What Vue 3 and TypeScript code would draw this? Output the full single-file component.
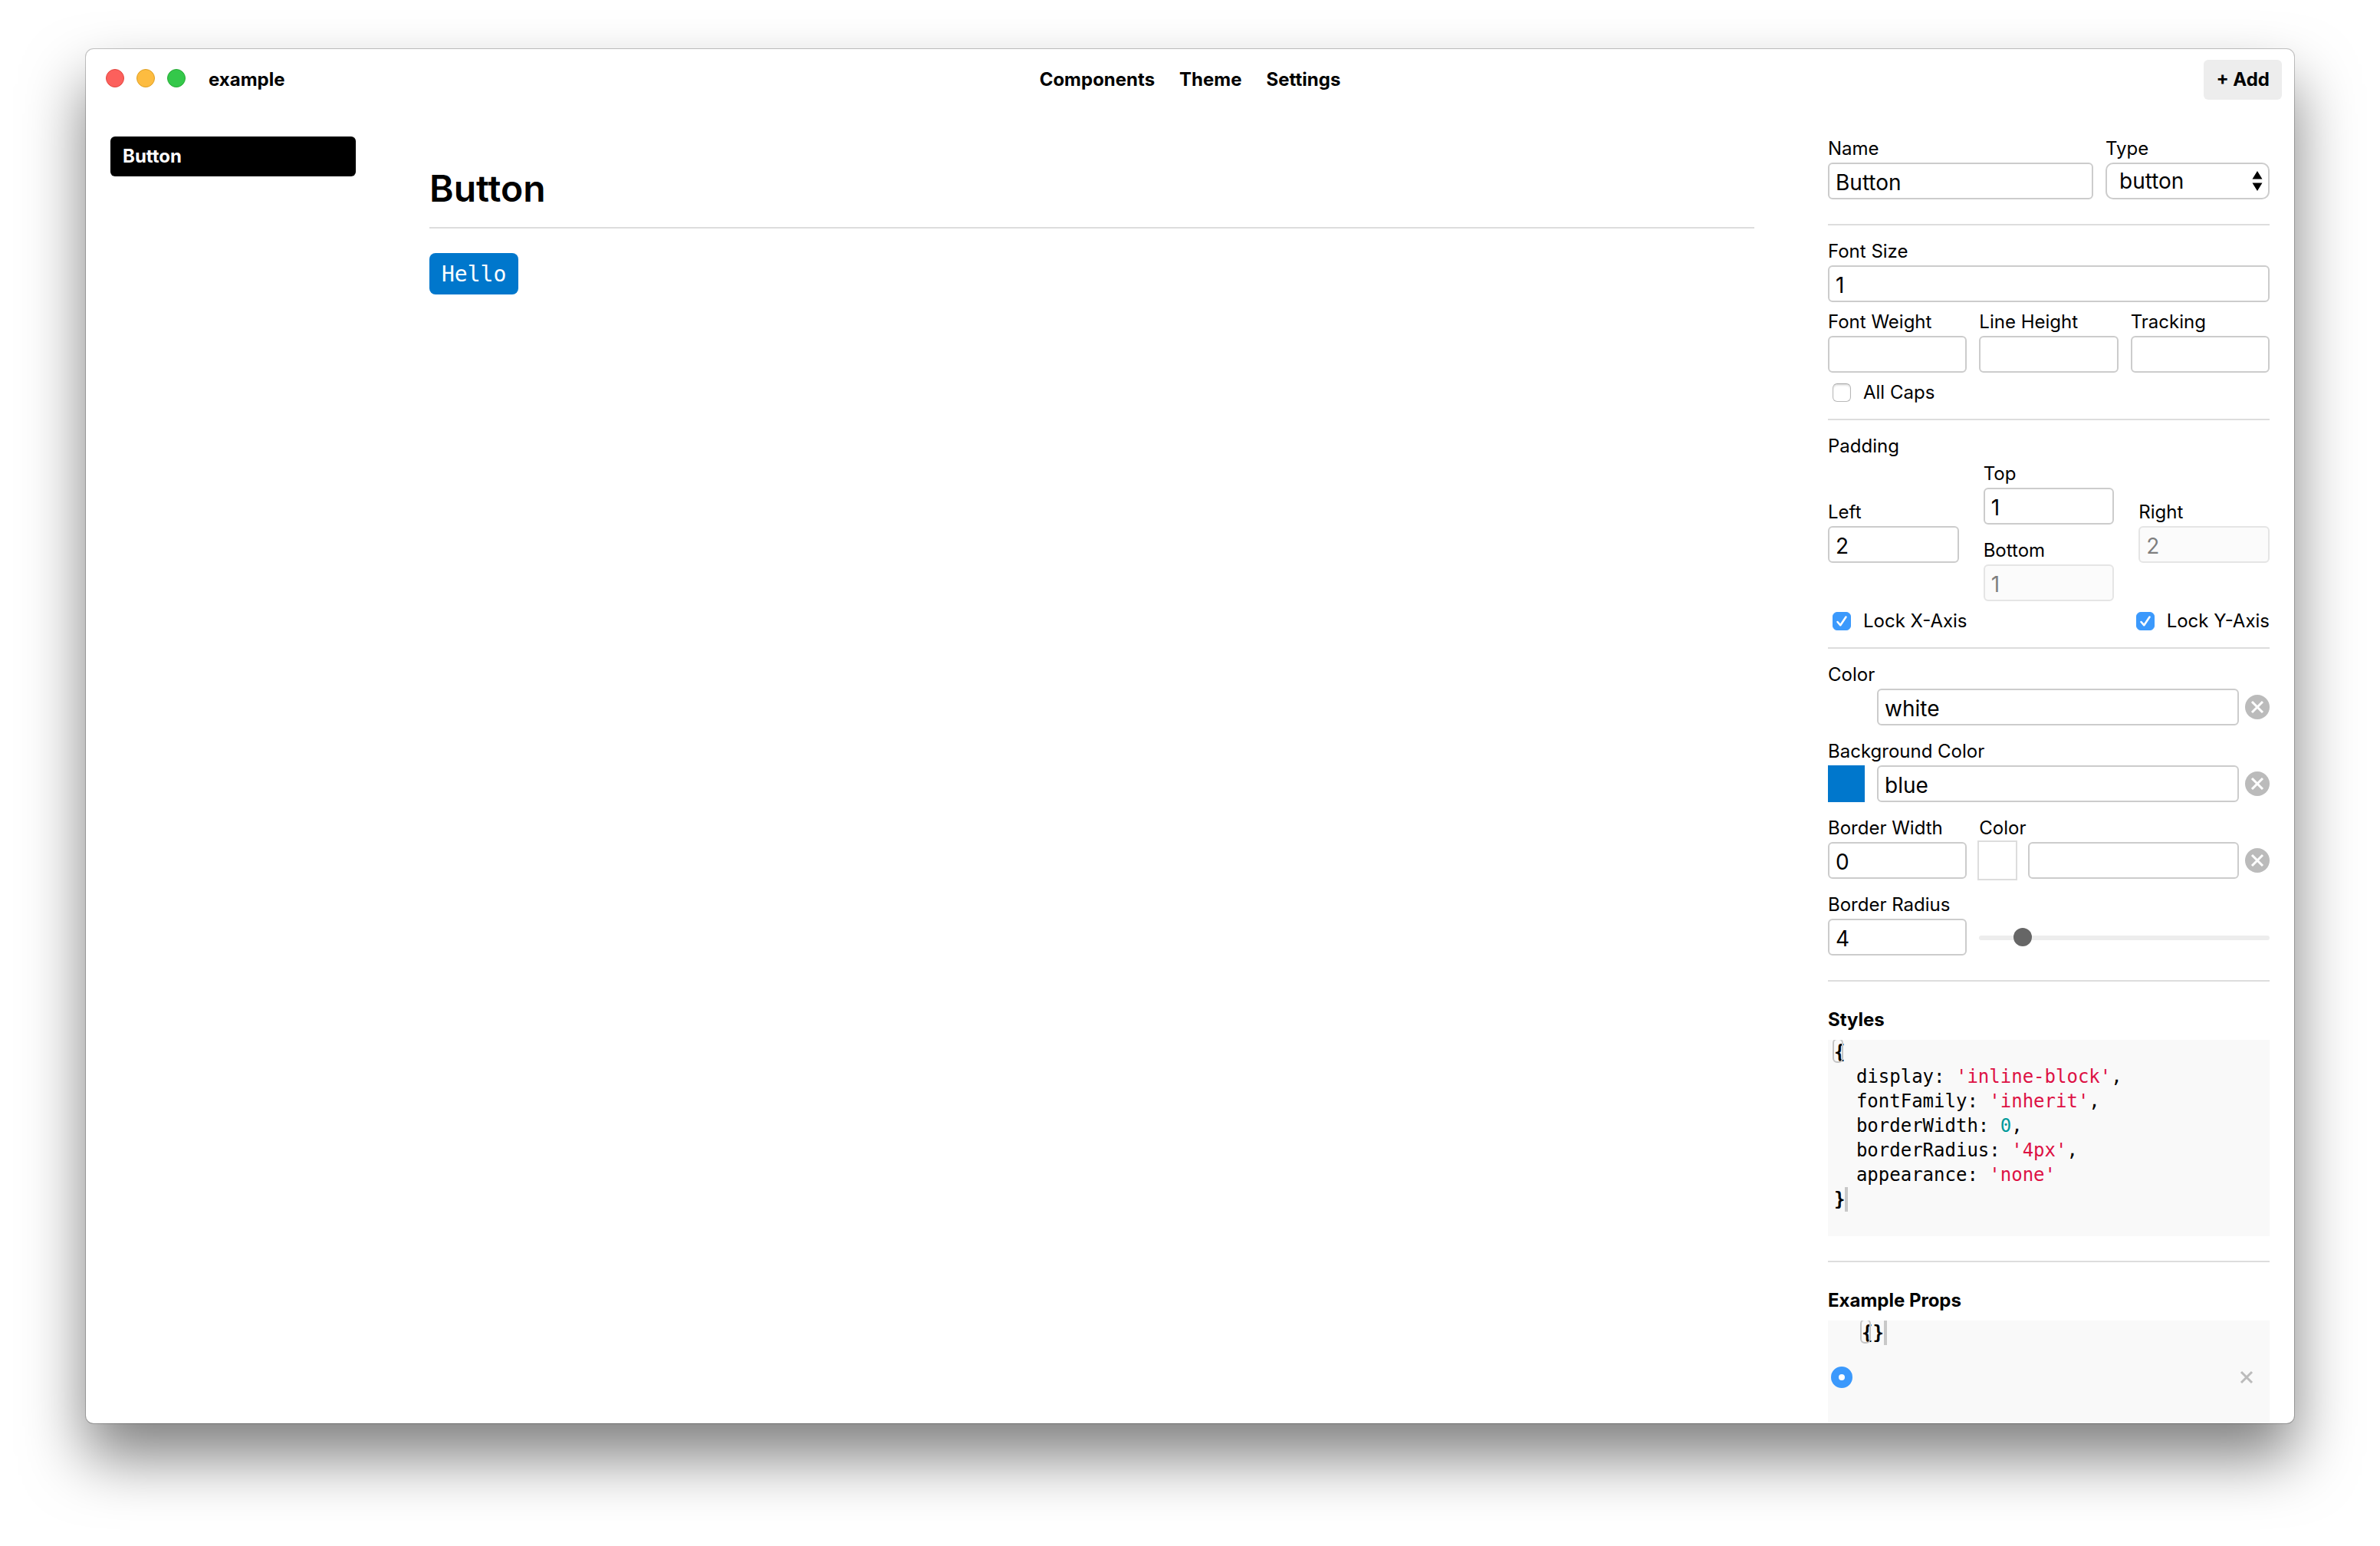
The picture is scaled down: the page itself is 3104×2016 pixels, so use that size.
<script setup lang="ts">
import { reactive, ref } from 'vue'

interface Token {
  text: string
  kind?: 'string' | 'number' | 'bracket' | 'caret'
}

const navItems: string[] = ['Components', 'Theme', 'Settings']
const components: string[] = ['Button']
const selected = ref('Button')

const form = reactive({
  name: 'Button',
  type: 'button',
  fontSize: '1',
  fontWeight: '',
  lineHeight: '',
  tracking: '',
  allCaps: false,
  top: '1',
  left: '2',
  right: '2',
  bottom: '1',
  lockX: true,
  lockY: true,
  color: 'white',
  background: 'blue',
  borderWidth: '0',
  borderColor: '',
  radius: '4',
})

const styleLines: Token[][] = [
  [{ text: '{', kind: 'bracket' }],
  [{ text: '  display: ' }, { text: "'inline-block'", kind: 'string' }, { text: ',' }],
  [{ text: '  fontFamily: ' }, { text: "'inherit'", kind: 'string' }, { text: ',' }],
  [{ text: '  borderWidth: ' }, { text: '0', kind: 'number' }, { text: ',' }],
  [{ text: '  borderRadius: ' }, { text: "'4px'", kind: 'string' }, { text: ',' }],
  [{ text: '  appearance: ' }, { text: "'none'", kind: 'string' }],
  [{ text: '}', kind: 'caret' }],
]
</script>

<template>
  <div class="desktop">
    <div class="window">
      <header class="titlebar">
        <div class="titlebar-left">
          <div class="lights" aria-hidden="true">
            <span class="light light-close"></span>
            <span class="light light-min"></span>
            <span class="light light-max"></span>
          </div>
          <span class="project">example</span>
        </div>
        <nav class="nav">
          <a v-for="item in navItems" :key="item" class="nav-link" href="#">{{ item }}</a>
        </nav>
        <div class="titlebar-right">
          <button class="add" type="button">+ Add</button>
        </div>
      </header>

      <div class="body">
        <aside class="sidebar">
          <a
            v-for="item in components"
            :key="item"
            class="side-link"
            :class="{ active: item === selected }"
            href="#"
            @click.prevent="selected = item"
          >{{ item }}</a>
        </aside>

        <main class="canvas">
          <h1 class="title">Button</h1>
          <hr class="rule" />
          <button class="sample" type="button">Hello</button>
        </main>

        <aside class="panel">
          <section class="row name-row">
            <div class="field grow">
              <label class="label" for="name">Name</label>
              <input id="name" v-model="form.name" class="input" type="text" />
            </div>
            <div class="field type-field">
              <label class="label" for="type">Type</label>
              <div class="select-wrap">
                <select id="type" v-model="form.type" class="select">
                  <option value="button">button</option>
                  <option value="a">a</option>
                  <option value="div">div</option>
                </select>
                <svg class="arrows" width="14" height="26" viewBox="0 0 14 26" aria-hidden="true">
                  <path d="M7 0 13.500 10.500H.5zM7 26 .5 15.500h13z" fill="#000" />
                </svg>
              </div>
            </div>
          </section>

          <hr class="rule rule-loose" />

          <section class="stack">
            <div class="field">
              <label class="label" for="font-size">Font Size</label>
              <input id="font-size" v-model="form.fontSize" class="input" type="text" />
            </div>
            <div class="thirds">
              <div class="field">
                <label class="label" for="font-weight">Font Weight</label>
                <input id="font-weight" v-model="form.fontWeight" class="input" type="text" />
              </div>
              <div class="field">
                <label class="label" for="line-height">Line Height</label>
                <input id="line-height" v-model="form.lineHeight" class="input" type="text" />
              </div>
              <div class="field">
                <label class="label" for="tracking">Tracking</label>
                <input id="tracking" v-model="form.tracking" class="input" type="text" />
              </div>
            </div>
            <label class="check">
              <span class="check-box">
                <input v-model="form.allCaps" class="checkbox" type="checkbox" />
              </span>
              <span>All Caps</span>
            </label>
          </section>

          <hr class="rule rule-tight" />

          <section>
            <div class="label">Padding</div>
            <div class="padding-grid">
              <div class="field">
                <label class="label" for="pad-left">Left</label>
                <input id="pad-left" v-model="form.left" class="input" type="text" />
              </div>
              <div class="padding-mid">
                <div class="field">
                  <label class="label" for="pad-top">Top</label>
                  <input id="pad-top" v-model="form.top" class="input" type="text" />
                </div>
                <div class="field">
                  <label class="label" for="pad-bottom">Bottom</label>
                  <input id="pad-bottom" v-model="form.bottom" class="input" type="text" :disabled="form.lockY" />
                </div>
              </div>
              <div class="field">
                <label class="label" for="pad-right">Right</label>
                <input id="pad-right" v-model="form.right" class="input" type="text" :disabled="form.lockX" />
              </div>
            </div>
            <div class="locks">
              <label class="check">
                <span class="check-box">
                  <input v-model="form.lockX" class="checkbox" type="checkbox" />
                  <svg v-if="form.lockX" class="tick" width="24" height="24" viewBox="0 0 24 24" aria-hidden="true">
                    <path d="M6.500 13 10.300 17.300 17.500 6.500" />
                  </svg>
                </span>
                <span>Lock X-Axis</span>
              </label>
              <label class="check">
                <span class="check-box">
                  <input v-model="form.lockY" class="checkbox" type="checkbox" />
                  <svg v-if="form.lockY" class="tick" width="24" height="24" viewBox="0 0 24 24" aria-hidden="true">
                    <path d="M6.500 13 10.300 17.300 17.500 6.500" />
                  </svg>
                </span>
                <span>Lock Y-Axis</span>
              </label>
            </div>
          </section>

          <hr class="rule rule-tight" />

          <section class="stack stack-wide">
            <div class="field">
              <label class="label" for="color">Color</label>
              <div class="color-row">
                <span class="swatch swatch-white"></span>
                <input id="color" v-model="form.color" class="input" type="text" />
                <button class="clear" type="button" aria-label="Clear color">
                  <svg width="32" height="32" viewBox="0 0 32 32"><circle cx="16" cy="16" r="16" /><path d="M9 9 23 23M23 9 9 23" /></svg>
                </button>
              </div>
            </div>
            <div class="field">
              <label class="label" for="background">Background Color</label>
              <div class="color-row">
                <span class="swatch swatch-blue"></span>
                <input id="background" v-model="form.background" class="input" type="text" />
                <button class="clear" type="button" aria-label="Clear background color">
                  <svg width="32" height="32" viewBox="0 0 32 32"><circle cx="16" cy="16" r="16" /><path d="M9 9 23 23M23 9 9 23" /></svg>
                </button>
              </div>
            </div>
            <div class="thirds">
              <div class="field">
                <label class="label" for="border-width">Border Width</label>
                <input id="border-width" v-model="form.borderWidth" class="input" type="text" />
              </div>
              <div class="field span-two">
                <label class="label" for="border-color">Color</label>
                <div class="color-row">
                  <span class="swatch swatch-empty"></span>
                  <input id="border-color" v-model="form.borderColor" class="input" type="text" />
                  <button class="clear" type="button" aria-label="Clear border color">
                    <svg width="32" height="32" viewBox="0 0 32 32"><circle cx="16" cy="16" r="16" /><path d="M9 9 23 23M23 9 9 23" /></svg>
                  </button>
                </div>
              </div>
            </div>
            <div class="thirds radius-row">
              <div class="field">
                <label class="label" for="radius">Border Radius</label>
                <input id="radius" v-model="form.radius" class="input" type="text" />
              </div>
              <input v-model="form.radius" class="slider span-two" type="range" min="0" max="32" aria-label="Border radius" />
            </div>
          </section>

          <hr class="rule rule-loose" />

          <section class="code-section">
            <h2 class="heading">Styles</h2>
            <pre class="code"><span v-for="(line, i) in styleLines" :key="i" class="line"><span v-for="(token, j) in line" :key="j" :class="token.kind">{{ token.text }}</span></span></pre>
          </section>

          <hr class="rule rule-loose" />

          <section class="code-section">
            <h2 class="heading">Example Props</h2>
            <div class="example">
              <input class="radio" type="radio" name="example" checked aria-label="Use this example" />
              <pre class="code example-code"><span class="line"><span class="bracket">{</span><span class="caret">}</span></span></pre>
              <button class="remove" type="button" aria-label="Remove example">
                <svg width="32" height="32" viewBox="0 0 32 32"><path d="M9 9 23 23M23 9 9 23" /></svg>
              </button>
            </div>
          </section>
        </aside>
      </div>
    </div>
  </div>
</template>

<style>
body {
  margin: 0;
  background: #fff;
}
</style>

<style scoped>
* {
  box-sizing: border-box;
}

.desktop {
  display: flex;
  height: 100vh;
  padding: 64px 112px 160px;
  overflow: hidden;
  background: #fff;
  color: #000;
  font-family: Inter, 'Liberation Sans', sans-serif;
  font-size: 24px;
  line-height: 36px;
}

.window {
  display: flex;
  flex: 1;
  flex-direction: column;
  min-width: 0;
  overflow: hidden;
  border-radius: 10px;
  background: #fff;
  box-shadow:
    0 0 0 1px rgba(0, 0, 0, 0.22),
    0 44px 80px rgba(0, 0, 0, 0.5);
}

button,
input,
select {
  margin: 0;
  font: inherit;
  color: inherit;
}

.titlebar {
  display: grid;
  flex: none;
  grid-template-columns: 1fr auto 1fr;
  align-items: center;
  height: 80px;
  padding: 0 16px;
  font-weight: 700;
}

.titlebar-left {
  display: flex;
  align-items: center;
  gap: 30px;
  padding-left: 10px;
}

.titlebar-right {
  display: flex;
  justify-content: flex-end;
}

.lights {
  display: flex;
  gap: 16px;
  padding-bottom: 4px;
}

.light {
  width: 24px;
  height: 24px;
  border: 1px solid;
  border-radius: 50%;
}

.light-close {
  border-color: #e2463f;
  background: #fc605c;
}

.light-min {
  border-color: #dfa023;
  background: #fdbc40;
}

.light-max {
  border-color: #27aa35;
  background: #34c84a;
}

.nav {
  display: flex;
}

.nav-link {
  padding: 0 16px;
  color: inherit;
  text-decoration: none;
}

.add {
  height: 52px;
  padding: 0 16px;
  border: 0;
  border-radius: 6px;
  background: #ededed;
  font-weight: 700;
}

.body {
  display: grid;
  flex: 1;
  grid-template-columns: 384px minmax(0, 1fr) 640px;
  min-height: 0;
}

.sidebar {
  padding: 34px 32px;
}

.side-link {
  display: block;
  padding: 8px 16px;
  border-radius: 6px;
  color: inherit;
  font-weight: 700;
  text-decoration: none;
}

.side-link.active {
  background: #000;
  color: #fff;
}

.canvas {
  padding: 64px;
}

.title {
  margin: 0;
  padding-top: 2px;
  font-size: 48px;
  font-weight: 600;
  line-height: 72px;
}

.title + .rule {
  margin-top: 14px;
}

.rule {
  height: 2px;
  margin: 0;
  border: 0;
  background: #ddd;
}

.rule-loose {
  margin-top: 32px;
}

.rule-tight {
  margin-top: 16px;
}

.rule + .stack,
.rule + section:not(.code-section) {
  margin-top: 16px;
}

.sample {
  height: 54px;
  margin-top: 32px;
  padding: 2px 16px 0;
  border: 0;
  border-radius: 8px;
  background: #07c;
  color: #fff;
  font-family: 'DejaVu Sans Mono', 'Liberation Mono', monospace;
  font-size: 28px;
}

.panel {
  padding: 32px;
  overflow-y: auto;
  scrollbar-width: none;
}

.row {
  display: flex;
  gap: 16px;
}

.grow {
  flex: 1;
}

.type-field {
  width: 214px;
}

.field {
  min-width: 0;
}

.label {
  display: block;
}

.input {
  display: block;
  width: 100%;
  height: 48px;
  padding: 4px 8px 0;
  border: 2px solid #ccc;
  border-radius: 6px;
  outline: 0;
  background: #fff;
  font-size: 28px;
}

.input:disabled {
  background: #f8f8f8;
  opacity: 0.5;
}

.select-wrap {
  display: grid;
  align-items: center;
}

.select {
  grid-area: 1 / 1;
  width: 100%;
  height: 48px;
  padding: 0 16px;
  border: 2px solid #ccc;
  border-radius: 10px;
  outline: 0;
  background: #fff;
  font-size: 28px;
  appearance: none;
}

.arrows {
  grid-area: 1 / 1;
  justify-self: end;
  margin-right: 9px;
  pointer-events: none;
}

.stack {
  display: flex;
  flex-direction: column;
  gap: 8px;
}

.stack-wide {
  gap: 16px;
}

.thirds {
  display: grid;
  grid-template-columns: repeat(3, minmax(0, 1fr));
  gap: 16px;
}

.span-two {
  grid-column: span 2;
}

.check {
  display: flex;
  align-items: center;
  gap: 16px;
}

.check-box {
  display: grid;
  margin-left: 6px;
}

.checkbox {
  grid-area: 1 / 1;
  width: 24px;
  height: 24px;
  border: 1px solid #b8b8b8;
  border-top-color: #a0a0a0;
  border-radius: 6px;
  background: #fff;
  box-shadow: inset 0 2px 2px rgba(0, 0, 0, 0.1);
  appearance: none;
}

.checkbox:checked {
  border-color: #3b99fc;
  background: #3b99fc;
  box-shadow: none;
}

.tick {
  grid-area: 1 / 1;
  fill: none;
  stroke: #fff;
  stroke-width: 2.500;
  stroke-linecap: round;
  stroke-linejoin: round;
  pointer-events: none;
}

.padding-grid {
  display: grid;
  grid-template-columns: repeat(3, minmax(0, 1fr));
  gap: 32px;
  align-items: center;
}

.padding-mid {
  display: flex;
  flex-direction: column;
  gap: 16px;
}

.locks {
  display: flex;
  justify-content: space-between;
  margin-top: 8px;
}

.color-row {
  display: flex;
  align-items: center;
}

.color-row .input {
  flex: 1;
  min-width: 0;
}

.swatch {
  flex: none;
  width: 48px;
  height: 48px;
  margin-right: 16px;
}

.swatch-white {
  background: #fff;
}

.swatch-blue {
  background: #07c;
}

.swatch-empty {
  box-shadow: 0 0 0 2px #ddd;
}

.clear,
.remove {
  display: block;
  flex: none;
  width: 32px;
  height: 32px;
  padding: 0;
  border: 0;
  background: none;
}

.clear {
  margin-left: 8px;
}

.clear svg,
.remove svg {
  display: block;
  fill: #bbb;
  stroke-width: 3;
}

.clear path {
  stroke: #fff;
}

.remove path {
  stroke: #bbb;
}

.radius-row {
  align-items: end;
}

.slider {
  width: 100%;
  height: 48px;
  padding-top: 2px;
  background: none;
  outline: 0;
  appearance: none;
}

.slider::-webkit-slider-runnable-track {
  height: 6px;
  border-radius: 3px;
  background: #ededed;
}

.slider::-webkit-slider-thumb {
  width: 24px;
  height: 24px;
  margin-top: -10px;
  border: 0;
  border-radius: 50%;
  background: #666;
  appearance: none;
}

.code-section {
  margin-top: 32px;
}

.heading {
  margin: 0 0 8px;
  font-size: 24px;
  font-weight: 700;
  line-height: 36px;
}

.code {
  min-height: 256px;
  margin: 0;
  padding: 0 8px;
  overflow: hidden;
  background: #f9f9f9;
  font-family: 'DejaVu Sans Mono', 'Liberation Mono', monospace;
  font-size: 24px;
  line-height: 32px;
}

.line {
  display: block;
}

.string {
  color: #dd1144;
}

.number {
  color: #009999;
}

.bracket,
.caret {
  position: relative;
  font-weight: 700;
}

.bracket::before {
  position: absolute;
  top: -4px;
  left: -2px;
  width: 100%;
  height: 32px;
  border: 2px solid #c4c4c4;
  border-radius: 6px;
  box-sizing: border-box;
  content: '';
}

.caret::after {
  position: absolute;
  top: -2px;
  left: 100%;
  width: 4px;
  height: 32px;
  background: #c8c8c8;
  content: '';
}

.example {
  display: flex;
  align-items: center;
  height: 148px;
  padding: 0 14px 0 4px;
  background: #f9f9f9;
}

.example-code {
  flex: 1;
  align-self: stretch;
  min-height: 0;
  margin-left: 4px;
}

.radio {
  flex: none;
  width: 28px;
  height: 28px;
  border: 10px solid #3b99fc;
  border-radius: 50%;
  background: #fff;
  appearance: none;
}
</style>
